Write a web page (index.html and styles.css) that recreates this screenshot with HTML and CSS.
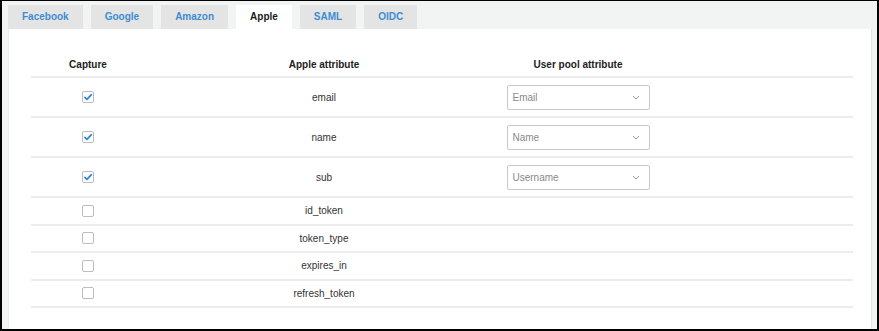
FILE: index.html
```html
<!DOCTYPE html>
<html>
<head>
  <title>Attribute mapping</title>
  <link rel="stylesheet" href="styles.css">
</head>
<body>
  <div class="frame">
    <ul class="tabs">
      <li class="tab">Facebook</li>
      <li class="tab">Google</li>
      <li class="tab">Amazon</li>
      <li class="tab active">Apple</li>
      <li class="tab">SAML</li>
      <li class="tab">OIDC</li>
    </ul>
    <div class="panel">
      <div class="mapping">
        <div class="row head">
          <div class="cell">Capture</div>
          <div class="cell">Apple attribute</div>
          <div class="cell">User pool attribute</div>
          <div class="cell"></div>
        </div>

        <div class="row big">
          <div class="cell">
            <span class="check on"><svg width="12" height="12" viewBox="0 0 12 12"><path d="M2.8 6.3 L5 8.4 L9.4 3.6" fill="none" stroke="#2a86d6" stroke-width="1.7" stroke-linecap="round" stroke-linejoin="round"/></svg></span>
          </div>
          <div class="cell">email</div>
          <div class="cell">
            <div class="select"><span>Email</span><svg width="8" height="5" viewBox="0 0 8 5"><path d="M1 1 L4 4 L7 1" fill="none" stroke="#9a9a9a" stroke-width="1"/></svg></div>
          </div>
          <div class="cell"></div>
        </div>

        <div class="row big">
          <div class="cell">
            <span class="check on"><svg width="12" height="12" viewBox="0 0 12 12"><path d="M2.8 6.3 L5 8.4 L9.4 3.6" fill="none" stroke="#2a86d6" stroke-width="1.7" stroke-linecap="round" stroke-linejoin="round"/></svg></span>
          </div>
          <div class="cell">name</div>
          <div class="cell">
            <div class="select"><span>Name</span><svg width="8" height="5" viewBox="0 0 8 5"><path d="M1 1 L4 4 L7 1" fill="none" stroke="#9a9a9a" stroke-width="1"/></svg></div>
          </div>
          <div class="cell"></div>
        </div>

        <div class="row big">
          <div class="cell">
            <span class="check on"><svg width="12" height="12" viewBox="0 0 12 12"><path d="M2.8 6.3 L5 8.4 L9.4 3.6" fill="none" stroke="#2a86d6" stroke-width="1.7" stroke-linecap="round" stroke-linejoin="round"/></svg></span>
          </div>
          <div class="cell">sub</div>
          <div class="cell">
            <div class="select"><span>Username</span><svg width="8" height="5" viewBox="0 0 8 5"><path d="M1 1 L4 4 L7 1" fill="none" stroke="#9a9a9a" stroke-width="1"/></svg></div>
          </div>
          <div class="cell"></div>
        </div>

        <div class="row">
          <div class="cell"><span class="check"></span></div>
          <div class="cell">id_token</div>
          <div class="cell"></div>
          <div class="cell"></div>
        </div>
        <div class="row">
          <div class="cell"><span class="check"></span></div>
          <div class="cell">token_type</div>
          <div class="cell"></div>
          <div class="cell"></div>
        </div>
        <div class="row">
          <div class="cell"><span class="check"></span></div>
          <div class="cell">expires_in</div>
          <div class="cell"></div>
          <div class="cell"></div>
        </div>
        <div class="row">
          <div class="cell"><span class="check"></span></div>
          <div class="cell">refresh_token</div>
          <div class="cell"></div>
          <div class="cell"></div>
        </div>
      </div>
    </div>
  </div>
</body>
</html>
```

FILE: styles.css
```css
body {
  margin: 0;
  font-family: 'Liberation Sans', Arial, sans-serif;
  font-size: 10px;
  color: #333;
}
.frame {
  box-sizing: border-box;
  width: 879px;
  height: 331px;
  display: flex;
  flex-direction: column;
  padding: 4px 5px 0 6px;
  background-color: #f2f3f3;
  border-style: solid;
  border-color: #000;
  border-width: 1px 2px 2px 2px;
}
.tabs {
  display: flex;
  gap: 8px;
  margin: 0;
  padding: 0 0 0 0;
  list-style: none;
}
.tab {
  height: 24px;
  line-height: 24px;
  padding: 0 14px;
  background-color: #e4e4e4;
  color: #3e8dd1;
  font-weight: bold;
}
.tab.active {
  background-color: #fff;
  color: #1a1a1a;
}
.panel {
  flex: 1;
  background-color: #fff;
  border-left: 1px solid #ececec;
  border-right: 1px solid #e2e2e2;
  padding: 23px 18px 0 22px;
}
.row {
  display: grid;
  grid-template-columns: 114px 358px 150px 1fr;
  align-items: center;
  height: 25.5px;
  border-bottom: 2px solid #ececec;
}
.row.head {
  height: 24px;
  font-weight: bold;
  color: #222;
}
.row.big {
  height: 38px;
}
.cell {
  display: flex;
  justify-content: center;
  align-items: center;
}
.check {
  box-sizing: border-box;
  width: 12px;
  height: 12px;
  border: 1px solid #bdbdbd;
  border-radius: 2px;
  background-color: #fff;
  display: flex;
  align-items: center;
  justify-content: center;
}
.check svg {
  flex: none;
}
.select {
  box-sizing: border-box;
  width: 143px;
  height: 25px;
  border: 1px solid #c9c9c9;
  border-radius: 2px;
  display: flex;
  align-items: center;
  justify-content: space-between;
  padding: 0 9px 0 5px;
  color: #8a8a8a;
}
```
